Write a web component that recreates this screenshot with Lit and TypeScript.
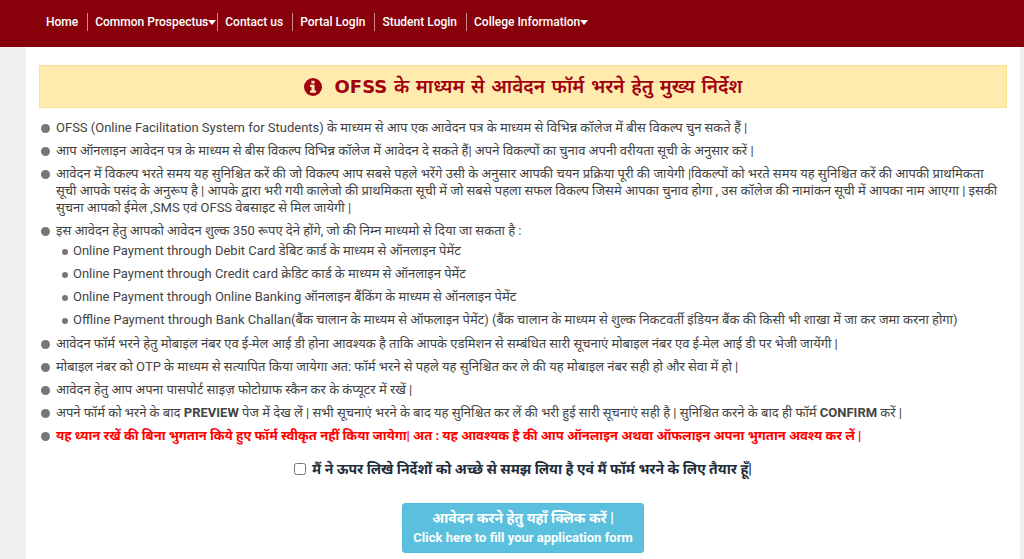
import { LitElement, html, css, nothing } from "lit";
import { customElement, state } from "lit/decorators.js";

interface NavItem {
  label: string;
  menu?: boolean;
}

const NAV: NavItem[] = [
  { label: "Home" },
  { label: "Common Prospectus", menu: true },
  { label: "Contact us" },
  { label: "Portal Login" },
  { label: "Student Login" },
  { label: "College Information", menu: true },
];

@customElement("site-nav")
export class SiteNav extends LitElement {
  static styles = css`
    :host {
      display: block;
      background: #880009;
    }
    .list {
      display: flex;
      flex-wrap: wrap;
      align-items: center;
      min-height: 18px;
      margin: 0;
      padding: 13px 39px 16px;
      list-style: none;
    }
    .link {
      display: flex;
      align-items: center;
      height: 18px;
      padding: 0 9px 0 7px;
      color: #fff;
      font-size: 12px;
      font-weight: 500;
      line-height: 18px;
      text-decoration: none;
      white-space: nowrap;
    }
    .item + .item {
      border-left: 1px solid #c98a8e;
    }
    .menu {
      padding-right: 1px;
    }
    .caret {
      width: 8px;
      height: 5px;
      fill: #fff;
    }
  `;

  render() {
    return html`<nav>
      <ul class="list">
        ${NAV.map(
          (n) => html`<li class="item">
            <a class="link ${n.menu ? "menu" : ""}" href="#">
              ${n.label}${n.menu
                ? html`<svg class="caret" viewBox="0 0 8 5" aria-hidden="true"><path d="M0 0h8L4 5z" /></svg>`
                : nothing}
            </a>
          </li>`,
        )}
      </ul>
    </nav>`;
  }
}

@customElement("app-root")
export class AppRoot extends LitElement {
  @state() private agreed = false;

  static styles = css`
    :host {
      display: block;
      min-height: 100vh;
      background: #f0f0f0;
      color: #444;
      font-family: Roboto, "Noto Sans Devanagari", "Noto Sans", sans-serif;
      font-size: 13px;
      line-height: 17px;
    }
    .page {
      box-sizing: border-box;
      min-height: calc(100vh - 47px);
      margin: 0 4px 0 26px;
      padding: 18px 13px 6px;
      background: #fff;
    }
    .title {
      display: flex;
      align-items: center;
      justify-content: center;
      gap: 13px;
      margin: 0 0 11px;
      padding: 7px 12px;
      border: 1px solid #fbe08f;
      background: #ffebad;
      color: #a0000f;
      font-family: "DejaVu Sans", "Noto Sans Devanagari", "Noto Sans", sans-serif;
      font-size: 19px;
      font-weight: 600;
      line-height: 27px;
    }
    .brand {
      font-size: 18px;
    }
    .info {
      flex: none;
      width: 18px;
      height: 18px;
    }
    .rules,
    .modes {
      display: grid;
      gap: 6px;
      margin: 0;
      padding: 0;
      list-style: none;
    }
    .rule {
      position: relative;
      padding-left: 17px;
    }
    .modes {
      margin: 3px 0 1px;
    }
    .rule::before {
      content: "";
      position: absolute;
      top: 5px;
      left: 2px;
      width: 9px;
      height: 9px;
      border-radius: 50%;
      background: #777;
    }
    .modes .rule::before {
      top: 7px;
      left: 6px;
      width: 6px;
      height: 6px;
    }
    .warning {
      color: #f00;
      font-weight: 700;
    }
    .agree {
      display: flex;
      align-items: center;
      justify-content: center;
      gap: 6px;
      margin: 14px 0 23px;
      color: #212d3a;
      font-size: 14px;
      font-weight: 700;
      line-height: 22px;
    }
    .box {
      width: 12px;
      height: 12px;
      margin: 0;
    }
    .actions {
      display: flex;
      justify-content: center;
    }
    .apply {
      padding: 5px 10px;
      border: 1px solid #53bbdb;
      border-radius: 3px;
      background: #5bc0de;
      color: #fff;
      font: inherit;
      font-size: 14px;
      font-weight: 700;
      line-height: 19px;
      cursor: pointer;
    }
    .english {
      font-size: 13px;
    }
  `;

  private onAgree(e: Event) {
    this.agreed = (e.target as HTMLInputElement).checked;
  }

  render() {
    return html`
      <site-nav></site-nav>
      <main class="page">
        <h1 class="title">
          <svg class="info" viewBox="0 0 18 18" aria-hidden="true">
            <circle cx="9" cy="9" r="9" fill="#a0000f" />
            <path fill="#ffebad" d="M7.4 2.8h3.2v2.6H7.4zM6 6.8h4.6v5.6h1.5v2.3H6v-2.3h1.5V9.1H6z" />
          </svg>
          <span><span class="brand">OFSS</span> के माध्यम से आवेदन फॉर्म भरने हेतु मुख्य निर्देश</span>
        </h1>
        <ul class="rules">
          <li class="rule">OFSS (Online Facilitation System for Students) के माध्यम से आप एक आवेदन पत्र के माध्यम से विभिन्न कॉलेज में बीस विकल्प चुन सकते हैं |</li>
          <li class="rule">आप ऑनलाइन आवेदन पत्र के माध्यम से बीस विकल्प विभिन्न कॉलेज में आवेदन दे सकते हैं| अपने विकल्पों का चुनाव अपनी वरीयता सूची के अनुसार करें |</li>
          <li class="rule">आवेदन में विकल्प भरते समय यह सुनिश्चित करें की जो विकल्प आप सबसे पहले भरेंगे उसी के अनुसार आपकी चयन प्रक्रिया पूरी की जायेगी |विकल्पों को भरते समय यह सुनिश्चित करें की आपकी प्राथमिकता सूची आपके पसंद के अनुरूप है | आपके द्वारा भरी गयी कालेजो की प्राथमिकता सूची में जो सबसे पहला सफल विकल्प जिसमे आपका चुनाव होगा , उस कॉलेज की नामांकन सूची में आपका नाम आएगा | इसकी सुचना आपको ईमेल ,SMS एवं OFSS वेबसाइट से मिल जायेगी |</li>
          <li class="rule">
            इस आवेदन हेतु आपको आवेदन शुल्क 350 रूपए देने होंगे, जो की निम्न माध्यमो से दिया जा सकता है :
            <ul class="modes">
              <li class="rule">Online Payment through Debit Card डेबिट कार्ड के माध्यम से ऑनलाइन पेमेंट</li>
              <li class="rule">Online Payment through Credit card क्रेडिट कार्ड के माध्यम से ऑनलाइन पेमेंट</li>
              <li class="rule">Online Payment through Online Banking ऑनलाइन बैंकिंग के माध्यम से ऑनलाइन पेमेंट</li>
              <li class="rule">Offline Payment through Bank Challan(बैंक चालान के माध्यम से ऑफलाइन पेमेंट) (बैंक चालान के माध्यम से शुल्क निकटवर्ती इंडियन बैंक की किसी भी शाखा में जा कर जमा करना होगा)</li>
            </ul>
          </li>
          <li class="rule">आवेदन फॉर्म भरने हेतु मोबाइल नंबर एव ई-मेल आई डी होना आवश्यक है ताकि आपके एडमिशन से सम्बंधित सारी सूचनाएं मोबाइल नंबर एव ई-मेल आई डी पर भेजी जायेंगी |</li>
          <li class="rule">मोबाइल नंबर को OTP के माध्यम से सत्यापित किया जायेगा अत: फॉर्म भरने से पहले यह सुनिश्चित कर ले की यह मोबाइल नंबर सही हो और सेवा में हो |</li>
          <li class="rule">आवेदन हेतु आप अपना पासपोर्ट साइज़ फोटोग्राफ स्कैन कर के कंप्यूटर में रखें |</li>
          <li class="rule">अपने फॉर्म को भरने के बाद <strong>PREVIEW</strong> पेज में देख लें | सभी सूचनाएं भरने के बाद यह सुनिश्चित कर लें की भरी हुई सारी सूचनाएं सही है | सुनिश्चित करने के बाद ही फॉर्म <strong>CONFIRM</strong> करें |</li>
          <li class="rule warning">यह ध्यान रखें की बिना भुगतान किये हुए फॉर्म स्वीकृत नहीं किया जायेगा| अत : यह आवश्यक है की आप ऑनलाइन अथवा ऑफलाइन अपना भुगतान अवश्य कर लें |</li>
        </ul>
        <label class="agree">
          <input class="box" type="checkbox" .checked=${this.agreed} @change=${this.onAgree} />
          <span>मैं ने ऊपर लिखे निर्देशों को अच्छे से समझ लिया है एवं मैं फॉर्म भरने के लिए तैयार हूँ|</span>
        </label>
        <div class="actions">
          <button class="apply" type="button">
            आवेदन करने हेतु यहाँ क्लिक करें |<br /><span class="english">Click here to fill your application form</span>
          </button>
        </div>
      </main>
    `;
  }
}
